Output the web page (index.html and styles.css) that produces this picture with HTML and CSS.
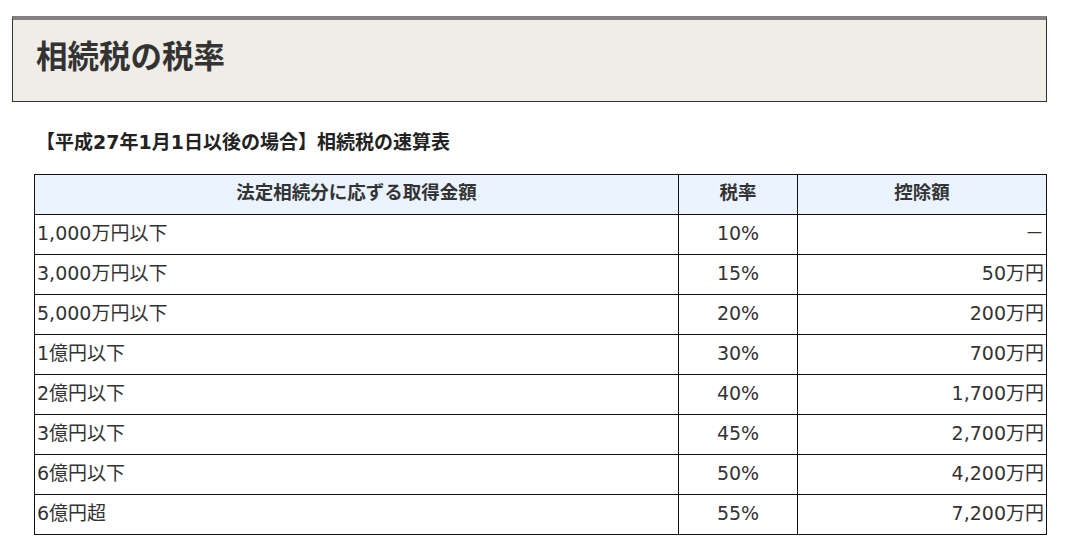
FILE: index.html
```html
<!DOCTYPE html>
<html lang="ja">
<head>
<meta charset="utf-8">
<title>相続税の税率</title>
<link rel="stylesheet" href="styles.css">
</head>
<body>
<div class="page">
  <h2 class="title">相続税の税率</h2>
  <div class="content">
    <p class="caption">【平成27年1月1日以後の場合】相続税の速算表</p>
    <table class="rate-table">
      <colgroup>
        <col class="c1"><col class="c2"><col class="c3">
      </colgroup>
      <thead>
        <tr><th>法定相続分に応ずる取得金額</th><th>税率</th><th>控除額</th></tr>
      </thead>
      <tbody>
        <tr><td>1,000万円以下</td><td class="ctr">10%</td><td class="rt">－</td></tr>
        <tr><td>3,000万円以下</td><td class="ctr">15%</td><td class="rt">50万円</td></tr>
        <tr><td>5,000万円以下</td><td class="ctr">20%</td><td class="rt">200万円</td></tr>
        <tr><td>1億円以下</td><td class="ctr">30%</td><td class="rt">700万円</td></tr>
        <tr><td>2億円以下</td><td class="ctr">40%</td><td class="rt">1,700万円</td></tr>
        <tr><td>3億円以下</td><td class="ctr">45%</td><td class="rt">2,700万円</td></tr>
        <tr><td>6億円以下</td><td class="ctr">50%</td><td class="rt">4,200万円</td></tr>
        <tr><td>6億円超</td><td class="ctr">55%</td><td class="rt">7,200万円</td></tr>
      </tbody>
    </table>
  </div>
</div>
</body>
</html>
```
FILE: styles.css
```css
html, body {
  margin: 0;
  padding: 0;
  background: #fff;
}
body {
  font-family: "DejaVu Sans", "Noto Sans CJK JP", sans-serif;
  color: #333;
}
.page {
  padding: 16px 0 0 12px;
  width: 1035px;
}
.title {
  margin: 0;
  box-sizing: border-box;
  height: 86px;
  background: #f0ece6;
  border-top: 4px solid #857f80;
  border-left: 1px solid #333;
  border-right: 1px solid #333;
  border-bottom: 1px solid #333;
  padding: 0 0 6px 23px;
  display: flex;
  align-items: center;
  font-size: 31.5px;
  font-weight: bold;
  color: #333;
  line-height: 1;
}
.content {
  padding-left: 22px;
}
.caption {
  margin: 25px 0 17px;
  height: 30px;
  display: flex;
  align-items: center;
  font-size: 19px;
  font-weight: bold;
  color: #222;
  line-height: 1;
  padding-left: 2px;
}
.rate-table {
  width: 1012px;
  border-collapse: collapse;
  table-layout: fixed;
  font-size: 19px;
}
.c1 { width: 644px; }
.c2 { width: 119px; }
.c3 { width: 249px; }
.rate-table th, .rate-table td {
  border: 1px solid #111;
  height: 40px;
  box-sizing: border-box;
  padding: 0 2px 3px;
  line-height: 1;
  color: #333;
}
.rate-table th {
  background: #ebf3ff;
  font-size: 18.5px;
  font-weight: bold;
  text-align: center;
}
.rate-table td {
  text-align: left;
  font-weight: normal;
}
.rate-table td.ctr { text-align: center; }
.rate-table td.rt { text-align: right; }
```
